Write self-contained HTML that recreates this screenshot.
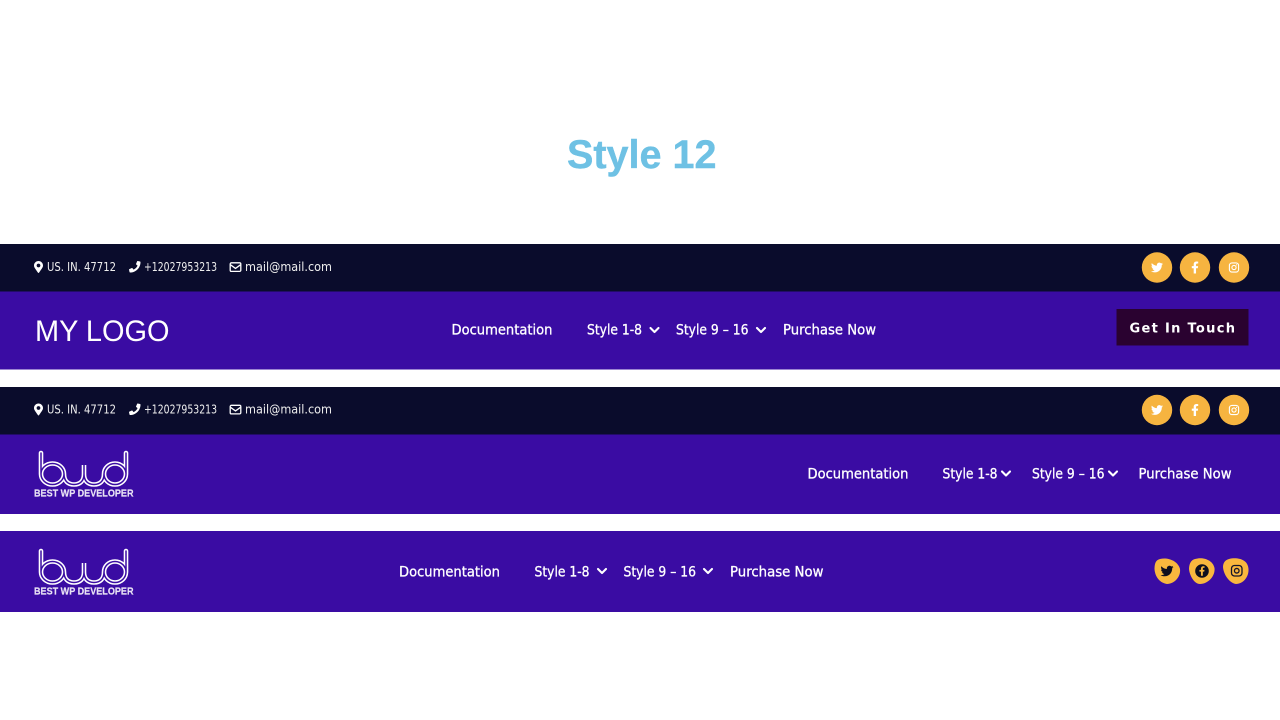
<!DOCTYPE html>
<html lang="en">
<head>
<meta charset="utf-8">
<title>Style 12</title>
<style>
html,body{margin:0;padding:0;background:#fff;width:1280px;height:720px;overflow:hidden}
svg{display:block}
text{font-family:"Liberation Sans",sans-serif}
.n{font-family:"DejaVu Sans",sans-serif;font-size:14px;fill:#fff;stroke:#fff;stroke-width:.3px}
.t{font-family:"DejaVu Sans",sans-serif;font-size:12px;fill:#eeeeee}
.c{fill:none;stroke:#fff;stroke-width:2.1;stroke-linecap:round;stroke-linejoin:round}
</style>
</head>
<body>
<svg width="1280" height="720" viewBox="0 0 1280 720" xmlns="http://www.w3.org/2000/svg">
<defs>
<symbol id="tw" viewBox="0 0 512 512"><path d="M459.37 151.716c.325 4.548.325 9.097.325 13.645 0 138.72-105.583 298.558-298.558 298.558-59.452 0-114.68-17.219-161.137-47.106 8.447.974 16.568 1.299 25.34 1.299 49.055 0 94.213-16.568 130.274-44.832-46.132-.975-84.792-31.188-98.112-72.772 6.498.974 12.995 1.624 19.818 1.624 9.421 0 18.843-1.3 27.614-3.573-48.081-9.747-84.143-51.98-84.143-102.985v-1.299c13.969 7.797 30.214 12.67 47.431 13.319-28.264-18.843-46.781-51.005-46.781-87.391 0-19.492 5.197-37.36 14.294-52.954 51.655 63.675 129.3 105.258 216.365 109.807-1.624-7.797-2.599-15.918-2.599-24.04 0-57.828 46.782-104.934 104.934-104.934 30.213 0 57.502 12.67 76.67 33.137 23.715-4.548 46.456-13.32 66.599-25.34-7.798 24.366-24.366 44.833-46.132 57.827 21.117-2.273 41.584-8.122 60.426-16.243-14.292 20.791-32.161 39.308-52.628 54.253z"/></symbol>
<symbol id="fb" viewBox="0 0 320 512"><path d="M279.14 288l14.22-92.66h-88.91v-60.13c0-25.35 12.42-50.06 52.24-50.06h40.42V6.26S260.43 0 225.36 0c-73.22 0-121.08 44.38-121.08 124.72v70.62H22.89V288h81.39v224h100.17V288z"/></symbol>
<symbol id="mk" viewBox="0 0 384 512"><path d="M172.268 501.67C26.97 291.031 0 261.48 0 192 0 85.961 85.961 0 192 0s192 85.961 192 192c0 69.48-26.97 99.031-172.268 309.67-9.535 13.774-29.93 13.773-39.464 0zM192 272c44.183 0 80-35.817 80-80s-35.817-80-80-80-80 35.817-80 80 35.817 80 80 80z"/></symbol>
<symbol id="ph" viewBox="0 0 512 512"><path d="M493.4 24.6l-104-24c-11.3-2.6-22.9 3.3-27.5 13.9l-48 112c-4.2 9.8-1.4 21.3 6.9 28l60.6 49.6c-36 76.7-98.9 140.5-177.2 177.2l-49.6-60.6c-6.8-8.3-18.2-11.1-28-6.9l-112 48C3.9 366.5-2 378.1.6 389.4l24 104C27.1 504.2 36.7 512 48 512c256.1 0 464-207.5 464-464 0-11.2-7.7-20.9-18.6-23.4z"/></symbol>
<g id="topleft">
<use href="#mk" x="34" y="-6" width="9" height="12" fill="#fff"/>
<text class="t" x="47" y="3.800" textLength="69" lengthAdjust="spacingAndGlyphs">US. IN. 47712</text>
<use href="#ph" x="129" y="-6" width="11.500" height="11.500" fill="#fff"/>
<text class="t" x="144" y="3.800" textLength="73" lengthAdjust="spacingAndGlyphs">+12027953213</text>
<rect x="230.200" y="-4.200" width="10.600" height="8.600" rx="1.200" fill="none" stroke="#fff" stroke-width="1.300"/>
<path d="M230.500 -2.200L235.500 1.400L240.500 -2.200" fill="none" stroke="#fff" stroke-width="1.300"/>
<text class="t" x="245" y="3.800" textLength="87" lengthAdjust="spacingAndGlyphs">mail@mail.com</text>
</g>
<g id="socials">
<circle cx="1157" cy="0" r="15.200" fill="#f6b440"/>
<circle cx="1195" cy="0" r="15.200" fill="#f6b440"/>
<circle cx="1234" cy="0" r="15.200" fill="#f6b440"/>
<use href="#tw" x="1151" y="-6" width="12" height="12" fill="#fff"/>
<use href="#fb" x="1191.200" y="-6" width="7.600" height="12" fill="#fff"/>
<rect x="1229.400" y="-4.600" width="9.200" height="9.200" rx="2.600" fill="none" stroke="#fff" stroke-width="1.100"/>
<circle cx="1234" cy="0" r="2.100" fill="none" stroke="#fff" stroke-width="1.100"/>
<circle cx="1236.600" cy="-2.600" r=".6" fill="#fff"/>
</g>
<g id="logo" fill="none">
<path d="M41 453V474M64 474A11.500 10.500 0 1 1 41 474A11.500 10.500 0 1 1 64 474C64 481 68 484.500 74 484.500C80 484.500 84 481 84 474V465V474C84 481 88 484.500 94 484.500C100 484.500 104 481 104 474A11 10.500 0 1 1 126 474A11 10.500 0 1 1 104 474M126 474V453" stroke="#fff" stroke-width="4.600" stroke-linecap="round"/>
<path d="M41 453V474M64 474A11.500 10.500 0 1 1 41 474A11.500 10.500 0 1 1 64 474C64 481 68 484.500 74 484.500C80 484.500 84 481 84 474V465V474C84 481 88 484.500 94 484.500C100 484.500 104 481 104 474A11 10.500 0 1 1 126 474A11 10.500 0 1 1 104 474M126 474V453" stroke="#3a0ca3" stroke-width="1.500" stroke-linecap="round"/>
<text x="34" y="496.500" textLength="99.500" lengthAdjust="spacingAndGlyphs" font-size="10" font-weight="700" fill="#e8e2f4" stroke="#e8e2f4" stroke-width=".2">BEST WP DEVELOPER</text>
</g>
</defs>

<rect width="1280" height="720" fill="#fff"/>
<text x="567" y="168" font-size="40" font-weight="700" fill="#6ec1e4" stroke="#6ec1e4" stroke-width=".4" textLength="149.500" lengthAdjust="spacingAndGlyphs">Style 12</text>

<!-- Header 1 -->
<rect y="244" width="1280" height="47.500" fill="#0a0c2c"/>
<rect y="291.500" width="1280" height="78" fill="#3a0ca3"/>
<use href="#topleft" y="267"/>
<use href="#socials" y="267.500"/>
<text x="35" y="341" font-size="30" fill="#fff" textLength="134.500" lengthAdjust="spacingAndGlyphs">MY LOGO</text>
<text class="n" x="451.500" y="334.700" textLength="101" lengthAdjust="spacingAndGlyphs">Documentation</text>
<text class="n" x="587" y="334.700" textLength="55" lengthAdjust="spacingAndGlyphs">Style 1-8</text>
<path class="c" d="M650.500 328L654.500 332L658.500 328"/>
<text class="n" x="676" y="334.700" textLength="72.500" lengthAdjust="spacingAndGlyphs">Style 9 – 16</text>
<path class="c" d="M757 328L761 332L765 328"/>
<text class="n" x="783" y="334.700" textLength="93" lengthAdjust="spacingAndGlyphs">Purchase Now</text>
<rect x="1116.500" y="309" width="132" height="36.500" fill="#2a0230"/>
<text x="1129.500" y="332.500" font-size="13" font-weight="700" fill="#fff" textLength="105.500" style="font-family:'DejaVu Sans',sans-serif">Get In Touch</text>

<!-- Header 2 -->
<rect y="387" width="1280" height="47.500" fill="#0a0c2c"/>
<rect y="434.500" width="1280" height="79.500" fill="#3a0ca3"/>
<use href="#topleft" y="409.500"/>
<use href="#socials" y="410"/>
<use href="#logo"/>
<text class="n" x="807.500" y="478.700" textLength="101" lengthAdjust="spacingAndGlyphs">Documentation</text>
<text class="n" x="942.500" y="478.700" textLength="55" lengthAdjust="spacingAndGlyphs">Style 1-8</text>
<path class="c" d="M1002 471.500L1006 475.500L1010 471.500"/>
<text class="n" x="1032" y="478.700" textLength="72.500" lengthAdjust="spacingAndGlyphs">Style 9 – 16</text>
<path class="c" d="M1109 471.500L1113 475.500L1117 471.500"/>
<text class="n" x="1138.500" y="478.700" textLength="93" lengthAdjust="spacingAndGlyphs">Purchase Now</text>

<!-- Header 3 -->
<rect y="531" width="1280" height="81" fill="#3a0ca3"/>
<use href="#logo" y="98"/>
<text class="n" x="399" y="576.700" textLength="101" lengthAdjust="spacingAndGlyphs">Documentation</text>
<text class="n" x="534.500" y="576.700" textLength="55" lengthAdjust="spacingAndGlyphs">Style 1-8</text>
<path class="c" d="M598 569L602 573L606 569"/>
<text class="n" x="623.500" y="576.700" textLength="72.500" lengthAdjust="spacingAndGlyphs">Style 9 – 16</text>
<path class="c" d="M704 569L708 573L712 569"/>
<text class="n" x="730" y="576.700" textLength="93.500" lengthAdjust="spacingAndGlyphs">Purchase Now</text>

<path d="M1160 559C1168 557 1178 561 1180 569C1181 577 1174 584 1167 584C1160 583 1155 577 1154.500 569C1154.500 563 1156 560 1160 559Z" fill="#f9b73e"/>
<use href="#tw" x="1160.500" y="564.500" width="13" height="13" fill="#0f0f1e"/>
<path d="M1195 559C1203 556.500 1213 560 1214.500 568C1215.500 576 1208 584 1200 584C1194 584 1189.500 575 1189 569C1189 564 1191 560 1195 559Z" fill="#f9b73e"/>
<circle cx="1202" cy="571" r="6.800" fill="#0f0f1e"/>
<use href="#fb" x="1199" y="566" width="6" height="10" fill="#f9b73e"/>
<path d="M1229 559C1237 557 1248 559 1248.500 569C1249 577 1243 584 1236 584C1229 583 1223.500 574 1223 567C1223 563 1225 560 1229 559Z" fill="#f9b73e"/>
<rect x="1231.500" y="565.500" width="10.500" height="10.500" rx="3" fill="none" stroke="#15152a" stroke-width="1.300"/>
<circle cx="1236.750" cy="570.750" r="2.300" fill="none" stroke="#15152a" stroke-width="1.300"/>
</svg>
</body>
</html>
